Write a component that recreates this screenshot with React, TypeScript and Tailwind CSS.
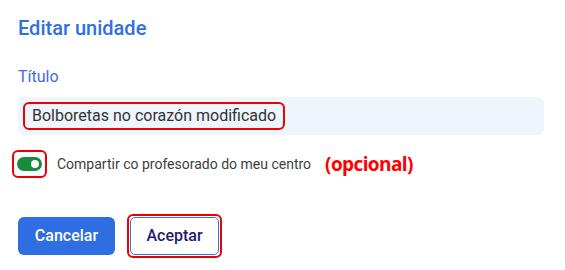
import { useState } from 'react'

export default function App() {
  const [shared, setShared] = useState(true)

  return (
    <div className="w-[565px] h-[270px] bg-white pl-[18px] pr-[21px] font-['Roboto',sans-serif]">
      <h2 className="pt-[15px] text-[20px] leading-[26px] font-medium text-[#2f6ee3]">Editar unidade</h2>

      <label className="block mt-[25px] text-[16px] leading-[22px] text-[#4466ea]">Título</label>
      <div className="mt-[9px] h-[38px] flex items-center pl-[5px] rounded-md bg-[#eef5fd]">
        <span className="inline-block h-[28px] px-[7px] leading-[24px] text-[16px] text-[#333] border-2 border-[#ee0000] rounded-[6px]">
          Bolboretas no corazón modificado
        </span>
      </div>

      <div className="mt-[15px] -ml-[6px] flex items-center">
        <button
          type="button"
          onClick={() => setShared(!shared)}
          className="w-[35px] h-[28px] flex items-center justify-center border-2 border-[#ee0000] rounded-[6px]"
        >
          <span className={`w-[25px] h-[14px] rounded-full flex items-center px-[3px] ${shared ? 'bg-[#1a8a3d] justify-end' : 'bg-gray-400 justify-start'}`}>
            <span className="w-[8px] h-[8px] rounded-full bg-white" />
          </span>
        </button>
        <span className="ml-[10px] text-[14px] text-[#3d3d3d]">Compartir co profesorado do meu centro</span>
        <span className="ml-[14px] text-[19px] font-bold tracking-[-0.6px] text-[#ff0000] font-['Open_Sans',sans-serif]">(opcional)</span>
      </div>

      <div className="mt-[35px] flex items-center gap-[12px]">
        <button type="button" className="w-[97px] h-[38px] rounded-md bg-[#2f6de3] text-white text-[16px] font-medium">
          Cancelar
        </button>
        <div className="border-2 border-[#ee0000] rounded-[6px] p-[1px]">
          <button type="button" className="w-[89px] h-[38px] rounded-[5px] border border-[#3a74e0] bg-white text-[#1f1b6b] text-[16px] font-medium">
            Aceptar
          </button>
        </div>
      </div>
    </div>
  )
}
